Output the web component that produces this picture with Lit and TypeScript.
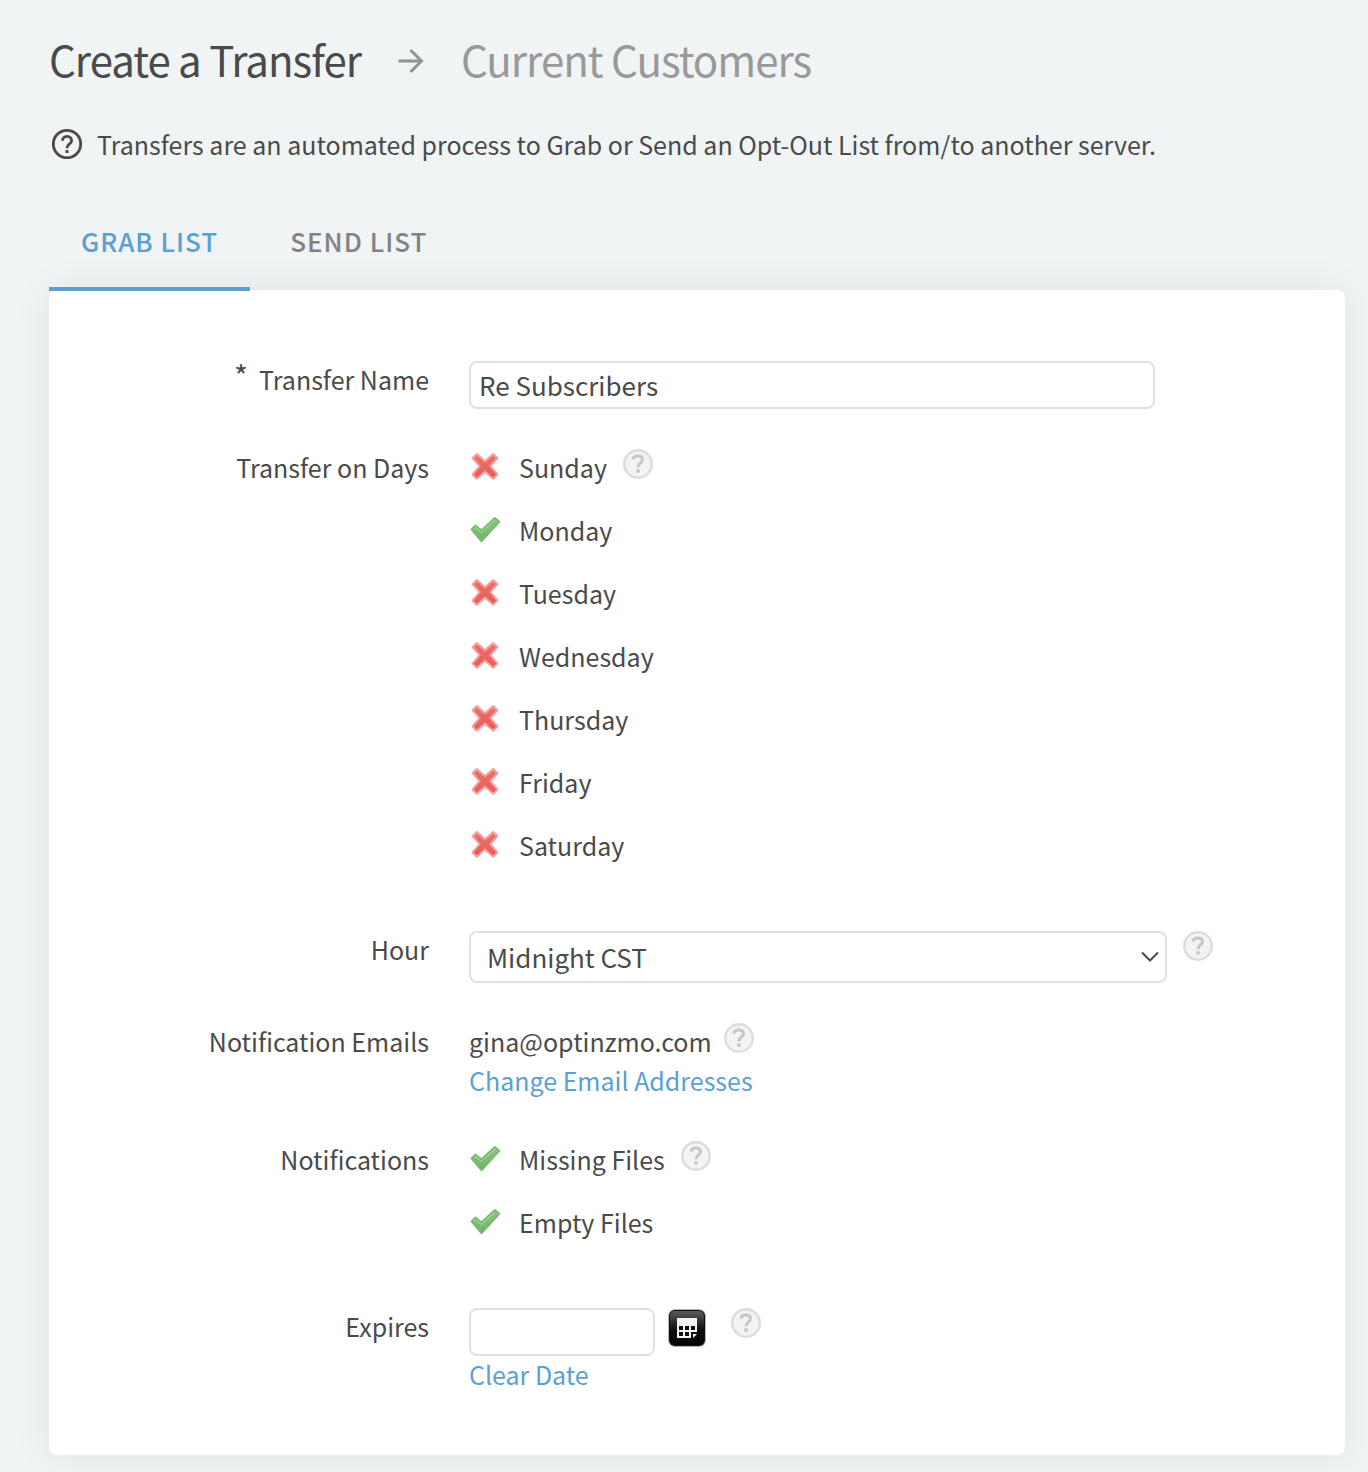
import { LitElement, html, svg, css, nothing } from "lit";
import { customElement, property, state } from "lit/decorators.js";
import { classMap } from "lit/directives/class-map.js";

const DAYS = ["Sunday", "Monday", "Tuesday", "Wednesday", "Thursday", "Friday", "Saturday"];

@customElement("help-tip")
export class HelpTip extends LitElement {
  @property() label = "Help";

  static styles = css`
    :host {
      display: block;
      flex: none;
    }
    .tip {
      display: block;
      width: 30px;
      height: 30px;
      padding: 0;
      border: 0;
      background: none;
      cursor: help;
    }
    .glyph {
      display: block;
    }
  `;

  render() {
    return html`
      <button class="tip" type="button" aria-label=${this.label}>
        <svg class="glyph" width="30" height="30" viewBox="0 0 30 30" aria-hidden="true">
          <circle cx="15" cy="15" r="13.8" fill="#f3f3f3" stroke="#dcdcdc" stroke-width="2.4" />
          <path
            d="M10 10.500C10.300 8.100 12.200 7 14.700 7 17.600 7 19.500 8.400 19.500 10.700 19.500 13.900 15 14.100 15 18.300"
            fill="none"
            stroke="#c6c6c6"
            stroke-width="3"
          />
          <rect x="13.300" y="20.300" width="3.400" height="3.400" rx="1" fill="#c6c6c6" />
        </svg>
      </button>
    `;
  }
}

@customElement("toggle-item")
export class ToggleItem extends LitElement {
  @property() label = "";
  @property({ type: Boolean }) checked = false;

  static styles = css`
    :host {
      display: block;
    }
    .item {
      display: flex;
      align-items: flex-start;
      gap: 18px;
      cursor: pointer;
    }
    .mark {
      position: relative;
      flex: none;
      width: 32px;
      height: 32px;
      padding-top: 2px;
    }
    .box {
      position: absolute;
      inset: 0;
      width: 100%;
      height: 100%;
      margin: 0;
      opacity: 0;
      cursor: pointer;
    }
    .icon {
      display: block;
    }
  `;

  private toggle(e: Event) {
    this.checked = (e.target as HTMLInputElement).checked;
  }

  render() {
    const tick = svg`
      <path d="M2.500 15.500 6.500 11.500 12.300 16.300 25.800 4 30.300 7.800 12.500 27.300Z"
        fill="url(#green)" stroke="#7db875" stroke-width="1.800" stroke-linejoin="round" />
      <path d="M5 15.500 6.800 13.500 12.300 18.500 25.600 6.200" fill="none" stroke="#9ed094" stroke-width="1.200" />`;
    const cross = svg`
      <path d="M7.800 3 16 10.200 24.200 3 28.500 7.200 21.300 15.200 28.500 23.500 24.200 27.700 16 20.400 7.800 27.700 3.500 23.500 10.700 15.200 3.500 7.200Z"
        fill="url(#red)" stroke="#f2a09c" stroke-width="2" stroke-linejoin="round" />
      <path d="M7.800 5.500 16 12.800 24.200 5.500 26 7.300 18.900 15.200 26 23.300 24.200 25 16 17.800 7.800 25 6 23.300 13.100 15.200 6 7.300Z"
        fill="#ea6460" fill-opacity="0.600" />`;
    return html`
      <label class="item">
        <span class="mark">
          <input class="box" type="checkbox" .checked=${this.checked} @change=${this.toggle} />
          <svg class="icon" width="32" height="32" viewBox="0 0 32 32" aria-hidden="true">
            <defs>
              <linearGradient id="green" x1="0" y1="0" x2="0" y2="1">
                <stop offset="0" stop-color="#8cc983" />
                <stop offset="1" stop-color="#6fb267" />
              </linearGradient>
              <linearGradient id="red" x1="0" y1="0" x2="0" y2="1">
                <stop offset="0" stop-color="#ef807c" />
                <stop offset="1" stop-color="#e94f4a" />
              </linearGradient>
            </defs>
            ${this.checked ? tick : cross}
          </svg>
        </span>
        <span>${this.label}</span>
      </label>
    `;
  }
}

@customElement("app-root")
export class AppRoot extends LitElement {
  @state() private tab = "grab";
  @state() private expires = "";

  static styles = css`
    :host {
      display: block;
      box-sizing: border-box;
      min-height: 100vh;
      padding: 32px 23px 17px 49px;
      background: #f0f4f5;
      color: #4a4a4a;
      font-family: "Noto Sans CJK SC", "Open Sans", sans-serif;
      font-size: 25px;
      line-height: 36px;
    }
    *,
    *::before {
      box-sizing: border-box;
    }
    .heading {
      display: flex;
      align-items: center;
      gap: 36px;
      height: 58px;
      font-size: 42px;
      letter-spacing: -1px;
      white-space: nowrap;
    }
    .title,
    .subtitle {
      margin: 0;
      padding-bottom: 4px;
      font: inherit;
    }
    .subtitle {
      color: #999;
    }
    .arrow,
    .info,
    .calendar,
    .chevron {
      display: block;
      flex: none;
    }
    .intro {
      display: flex;
      align-items: center;
      gap: 12px;
      margin: 36px 0;
    }
    .tabs {
      position: relative;
      z-index: 1;
      display: flex;
      gap: 8px;
      margin-bottom: -1px;
    }
    .tab {
      padding: 25px 32px 28px;
      border: 0;
      border-bottom: 4px solid transparent;
      background: none;
      color: #828282;
      font: inherit;
      font-size: 26px;
      font-weight: 500;
      letter-spacing: 1px;
      text-transform: uppercase;
      cursor: pointer;
    }
    .tab.active {
      border-bottom-color: #5b9fd3;
      color: #5b9fd3;
    }
    .card {
      display: flex;
      flex-direction: column;
      gap: 40px;
      padding: 71px 40px 63px 0;
      border-radius: 8px;
      background: #fff;
      box-shadow: 0 0 40px rgba(0, 0, 0, 0.07);
    }
    .row {
      display: grid;
      grid-template-columns: 380px minmax(0, 1fr);
      column-gap: 40px;
    }
    .name {
      text-align: right;
    }
    .star {
      margin-right: 11px;
      vertical-align: 2px;
      font-size: 30px;
      line-height: 0;
    }
    .line {
      display: flex;
      align-items: flex-start;
      gap: 16px;
    }
    .list {
      display: flex;
      flex-direction: column;
      gap: 27px;
      padding-bottom: 28px;
    }
    .stack {
      display: flex;
      flex-direction: column;
      align-items: flex-start;
      gap: 3px;
      padding-bottom: 3px;
    }
    .email {
      gap: 12px;
    }
    .control {
      display: block;
      width: 100%;
      height: 48px;
      padding: 0 8px 2px;
      border: 2px solid #e0e0e0;
      border-radius: 8px;
      background: #fff;
      color: inherit;
      font: inherit;
      font-size: 26px;
    }
    .text {
      max-width: 686px;
    }
    .date {
      width: 186px;
    }
    .picker {
      position: relative;
      width: 100%;
      max-width: 698px;
    }
    .select {
      height: 52px;
      padding: 0 40px 0 16px;
      appearance: none;
    }
    .chevron {
      position: absolute;
      top: 20px;
      right: 7px;
      pointer-events: none;
    }
    .expiry {
      gap: 12px;
    }
    .open {
      margin-right: 12px;
      padding: 0;
      border: 0;
      background: none;
      cursor: pointer;
    }
    .link {
      color: #5b9fd3;
      text-decoration: none;
    }
  `;

  private row(name: unknown, body: unknown, id?: string) {
    return html`
      <div class="row">
        ${id
          ? html`<label class="name" for=${id}>${name}</label>`
          : html`<div class="name">${name}</div>`}
        ${body}
      </div>
    `;
  }

  private tabButton(id: string, text: string) {
    return html`
      <button
        class=${classMap({ tab: true, active: this.tab === id })}
        type="button"
        role="tab"
        aria-selected=${this.tab === id}
        @click=${() => (this.tab = id)}
      >
        ${text}
      </button>
    `;
  }

  private clearDate(e: Event) {
    e.preventDefault();
    this.expires = "";
  }

  render() {
    return html`
      <header class="heading">
        <h1 class="title">Create a Transfer</h1>
        <svg class="arrow" width="28" height="28" viewBox="0 0 28 28" aria-hidden="true">
          <path d="M1.500 14H25M13.500 3 24.500 14 13.500 25" fill="none" stroke="#919396" stroke-width="3" />
        </svg>
        <span class="subtitle">Current Customers</span>
      </header>
      <p class="intro">
        <svg class="info" width="36" height="36" viewBox="0 0 36 36" aria-hidden="true">
          <circle cx="18" cy="18" r="13.700" fill="none" stroke="#4a4a4a" stroke-width="2.800" />
          <path
            d="M13.500 14.800C13.500 12 15.500 10.400 18 10.400S22.600 12.200 22.600 14.700C22.600 18 18 18 18 22.200"
            fill="none"
            stroke="#4a4a4a"
            stroke-width="2.800"
          />
          <rect x="16.500" y="24" width="3" height="3" fill="#4a4a4a" />
        </svg>
        <span>Transfers are an automated process to Grab or Send an Opt-Out List from/to another server.</span>
      </p>
      <nav class="tabs" role="tablist">
        ${this.tabButton("grab", "Grab List")} ${this.tabButton("send", "Send List")}
      </nav>
      <form class="card" @submit=${(e: Event) => e.preventDefault()}>
        ${this.row(
          html`<span class="star">*</span>Transfer Name`,
          html`<input class="control text" id="name" type="text" value="Re Subscribers" />`,
          "name",
        )}
        ${this.row(
          "Transfer on Days",
          html`<div class="list">
            ${DAYS.map(
              (day, i) => html`<div class="line">
                <toggle-item label=${day} ?checked=${day === "Monday"}></toggle-item>
                ${i === 0 ? html`<help-tip label="About transfer days"></help-tip>` : nothing}
              </div>`,
            )}
          </div>`,
        )}
        ${this.row(
          "Hour",
          html`<div class="line">
            <div class="picker">
              <select class="control select" id="hour">
                <option>Midnight CST</option>
              </select>
              <svg class="chevron" width="20" height="12" viewBox="0 0 20 12" aria-hidden="true">
                <path d="M2 1.500 10 9.500 18 1.500" fill="none" stroke="#4a4a4a" stroke-width="2" />
              </svg>
            </div>
            <help-tip label="About the hour"></help-tip>
          </div>`,
          "hour",
        )}
        ${this.row(
          "Notification Emails",
          html`<div class="stack">
            <div class="line email">
              <span>gina@optinzmo.com</span>
              <help-tip label="About notification emails"></help-tip>
            </div>
            <a class="link" href="#emails">Change Email Addresses</a>
          </div>`,
        )}
        ${this.row(
          "Notifications",
          html`<div class="list">
            <div class="line">
              <toggle-item label="Missing Files" checked></toggle-item>
              <help-tip label="About notifications"></help-tip>
            </div>
            <div class="line"><toggle-item label="Empty Files" checked></toggle-item></div>
          </div>`,
        )}
        ${this.row(
          "Expires",
          html`<div>
            <div class="line expiry">
              <input
                class="control date"
                id="expires"
                type="text"
                .value=${this.expires}
                @input=${(e: Event) => (this.expires = (e.target as HTMLInputElement).value)}
              />
              <button class="open" type="button" aria-label="Choose a date">
                <svg class="calendar" width="40" height="40" viewBox="0 0 40 40" aria-hidden="true">
                  <defs>
                    <linearGradient id="gloss" x1="0" y1="0" x2="0" y2="1">
                      <stop offset="0" stop-color="#5c5c5c" />
                      <stop offset="0.450" stop-color="#1c1c1c" />
                      <stop offset="0.600" stop-color="#0a0a0a" />
                      <stop offset="1" stop-color="#050505" />
                    </linearGradient>
                  </defs>
                  <rect x="1" y="1" width="38" height="38" rx="7" fill="#b5b5b5" />
                  <rect x="2" y="2" width="36" height="36" rx="6" fill="#111" />
                  <rect x="3" y="3" width="34" height="34" rx="5" fill="url(#gloss)" />
                  <path d="M10 10H30V25H25V30H10Z" fill="#f4f4f4" />
                  <path
                    d="M12 18h4v4h-4zM18 18h4v4h-4zM24 18h4v4h-4zM12 24h4v4h-4zM18 24h4v4h-4z"
                    fill="#0c0c0c"
                  />
                  <path d="M24 24H30V26H26V30H24Z" fill="#0c0c0c" />
                  <path d="M26 26H30L26 30Z" fill="#f4f4f4" />
                </svg>
              </button>
              <help-tip label="About expiry"></help-tip>
            </div>
            <a class="link" href="#clear" @click=${this.clearDate}>Clear Date</a>
          </div>`,
          "expires",
        )}
      </form>
    `;
  }
}
